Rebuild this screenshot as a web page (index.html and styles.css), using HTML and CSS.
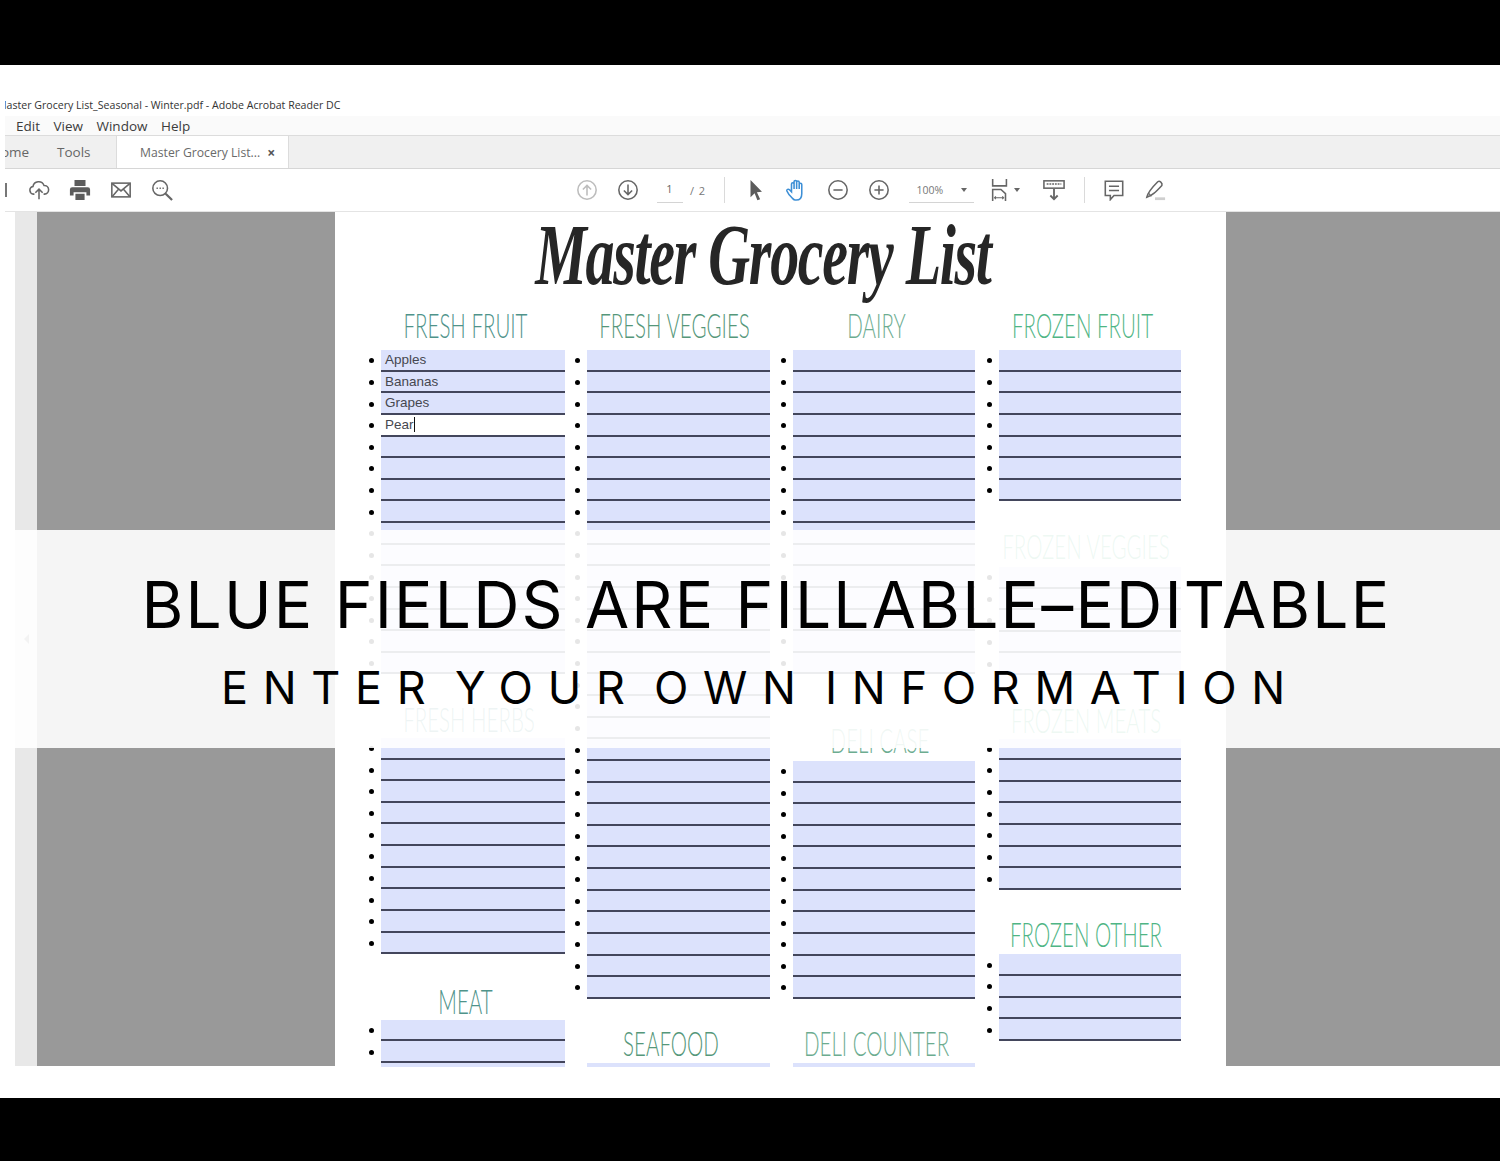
FILE: index.html
```html
<!DOCTYPE html>
<html lang="en">
<head>
<meta charset="utf-8">
<title>Master Grocery List</title>
<link rel="stylesheet" href="styles.css">
</head>
<body>
<div class="letterbox"></div>
<main class="shot">
  <div class="window">
    <div class="titlebar"><span>Master Grocery List_Seasonal - Winter.pdf - Adobe Acrobat Reader DC</span></div>
    <nav class="menubar"><span>Edit</span><span>View</span><span>Window</span><span>Help</span></nav>
    <div class="tabbar">
      <span class="tab-home">Home</span>
      <span class="tab-tools">Tools</span>
      <div class="tab-active"><span>Master Grocery List...</span><b>×</b></div>
    </div>
    <div class="toolbar">
      <i class="stub"></i>
      <span class="btn first"><svg viewBox="0 0 24 24" class="ico"><path d="M7 16.500H6a4.200 4.200 0 0 1-.6-8.300A6.300 6.300 0 0 1 17.500 7a4.700 4.700 0 0 1 .5 9.500h-1"/><path d="M12 22V11M8 15l4-4 4 4"/></svg></span>
      <span class="btn"><svg viewBox="0 0 24 24" class="ico solid"><path d="M6 1h12v6.500H6zM3.500 9h17A2.500 2.500 0 0 1 23 11.500V18h-4v-3.500H5V18H1v-6.500A2.500 2.500 0 0 1 3.500 9zM7 16h10v7H7z"/></svg></span>
      <span class="btn"><svg viewBox="0 0 24 24" class="ico"><rect x="2" y="4.500" width="20" height="15"/><path d="M2.500 5 12 13l9.500-8M2.500 19l7-8M21.500 19l-7-8"/></svg></span>
      <span class="btn"><svg viewBox="0 0 24 24" class="ico"><circle cx="10" cy="10" r="8"/><path d="m16 16 7 7" stroke-width="2.400"/><path d="M6 10h1.500M9.300 10h1.500M12.500 10H14"/></svg></span>
      <span class="btn nav-start"><svg viewBox="0 0 24 24" class="ico faint"><circle cx="12" cy="12" r="10"/><path d="M12 18V7M7.500 11.500 12 7l4.500 4.500"/></svg></span>
      <span class="btn"><svg viewBox="0 0 24 24" class="ico"><circle cx="12" cy="12" r="10"/><path d="M12 6v11M7.500 12.500 12 17l4.500-4.500"/></svg></span>
      <span class="page-num">1</span>
      <span class="page-total">/ 2</span>
      <i class="sep sep-a"></i>
      <span class="btn"><svg viewBox="0 0 24 24" class="ico solid"><path d="M6 1 18.500 14l-5.500.5 3.500 7.500-3 1.300-3-7.800L6 20z"/></svg></span>
      <span class="btn"><svg viewBox="0 0 24 24" class="ico blue"><path d="M6.500 20.500C4.500 18.500 2 15.500 1 13c-.5-1.500 1.500-2.500 2.800-1.300L6 14V5.500a1.400 1.400 0 0 1 2.800 0V11V3a1.400 1.400 0 0 1 2.800 0v8V3.500a1.400 1.400 0 0 1 2.800 0V11V6a1.400 1.400 0 0 1 2.800 0v10c0 4-2 7-6 7H10c-1.500 0-2.500-1.500-3.500-2.500z"/></svg></span>
      <span class="btn"><svg viewBox="0 0 24 24" class="ico"><circle cx="12" cy="12" r="10"/><path d="M7 12h10"/></svg></span>
      <span class="btn"><svg viewBox="0 0 24 24" class="ico"><circle cx="12" cy="12" r="10"/><path d="M7 12h10M12 7v10"/></svg></span>
      <span class="zoom-field"><span>100%</span><i class="caret"></i></span>
      <span class="btn fit"><svg viewBox="0 0 24 24" class="ico"><path d="M4 0v7.500h15V0"/><path d="M4 24V11.500h9l5 4.500v8"/><path d="M6 20.500h10M7.500 19 6 20.500 7.500 22M14.500 19l1.500 1.500-1.500 1.500" stroke-width="1.100"/></svg><i class="caret"></i></span>
      <span class="btn scroll"><svg viewBox="0 0 24 24" class="ico"><rect x="1" y="2" width="22" height="8"/><path d="M4 5.500h16" stroke-dasharray="2 1"/><path d="M12 11v11M8 18l4 4 4-4" stroke-width="2"/></svg></span>
      <i class="sep sep-b"></i>
      <span class="btn"><svg viewBox="0 0 24 24" class="ico"><path d="M2.500 2.500h19v15.500h-9.500l-4 4.500V18H2.500z"/><path d="M6.500 8h11M6.500 12.500h11"/></svg></span>
      <span class="btn"><svg viewBox="0 0 24 24" class="ico"><path d="M3 20c1-5 4-9 12-17 2-1.500 5.500 1 4.500 4C12 15 9 18 3 20z"/><path d="M5 15.500 8 19" stroke-width="1.200"/><path d="M12 21.500h11" stroke="#cfcfcf" stroke-width="3"/></svg></span>
    </div>
    <div class="viewer">
      <div class="rail"></div>
      <div class="strip"><i class="rail-arrow"></i></div>
      <div class="gutter"></div>
      <article class="page">
        <h1 class="doc-title">Master Grocery List</h1>
        <div class="columns">
          <div class="col">
            <section>
              <h2 class="c1 m8">FRESH FRUIT</h2>
              <ul>
                <li><span>Apples</span></li><li><span>Bananas</span></li><li><span>Grapes</span></li>
                <li><span class="editing">Pear</span></li>
                <li><span></span></li><li><span></span></li><li><span></span></li><li><span></span></li><li><span></span></li>
                <li><span></span></li><li><span></span></li><li><span></span></li><li><span></span></li><li><span></span></li><li><span></span></li>
              </ul>
            </section>
            <section>
              <h2 class="c1 m2 nudge">FRESH HERBS</h2>
              <ul>
                <li><span></span></li><li><span></span></li><li><span></span></li><li><span></span></li><li><span></span></li>
                <li><span></span></li><li><span></span></li><li><span></span></li><li><span></span></li><li><span></span></li>
              </ul>
            </section>
            <section class="after-herbs">
              <h2 class="c1 m2">MEAT</h2>
              <ul><li><span></span></li><li><span></span></li><li><span></span></li></ul>
            </section>
          </div>
          <div class="col">
            <section>
              <h2 class="c2 m8 nudge">FRESH VEGGIES</h2>
              <ul>
                <li><span></span></li><li><span></span></li><li><span></span></li><li><span></span></li><li><span></span></li>
                <li><span></span></li><li><span></span></li><li><span></span></li><li><span></span></li><li><span></span></li>
                <li><span></span></li><li><span></span></li><li><span></span></li><li><span></span></li><li><span></span></li>
                <li><span></span></li><li><span></span></li><li><span></span></li><li><span></span></li><li><span></span></li>
                <li><span></span></li><li><span></span></li><li><span></span></li><li><span></span></li><li><span></span></li>
                <li><span></span></li><li><span></span></li><li><span></span></li><li><span></span></li><li><span></span></li>
              </ul>
            </section>
            <section>
              <h2 class="c2 m3">SEAFOOD</h2>
              <ul><li><span></span></li></ul>
            </section>
          </div>
          <div class="col">
            <section>
              <h2 class="c3 m8">DAIRY</h2>
              <ul>
                <li><span></span></li><li><span></span></li><li><span></span></li><li><span></span></li><li><span></span></li>
                <li><span></span></li><li><span></span></li><li><span></span></li><li><span></span></li><li><span></span></li>
                <li><span></span></li><li><span></span></li><li><span></span></li><li><span></span></li><li><span></span></li>
              </ul>
            </section>
            <section class="after-dairy">
              <h2 class="c3 m4 nudge">DELI CASE</h2>
              <ul>
                <li><span></span></li><li><span></span></li><li><span></span></li><li><span></span></li><li><span></span></li><li><span></span></li>
                <li><span></span></li><li><span></span></li><li><span></span></li><li><span></span></li><li><span></span></li>
              </ul>
            </section>
            <section>
              <h2 class="c3 m3">DELI COUNTER</h2>
              <ul><li><span></span></li></ul>
            </section>
          </div>
          <div class="col">
            <section>
              <h2 class="c4 m8">FROZEN FRUIT</h2>
              <ul>
                <li><span></span></li><li><span></span></li><li><span></span></li><li><span></span></li>
                <li><span></span></li><li><span></span></li><li><span></span></li>
              </ul>
            </section>
            <section>
              <h2 class="c4 m4 nudge">FROZEN VEGGIES</h2>
              <ul><li><span></span></li><li><span></span></li><li><span></span></li><li><span></span></li><li><span></span></li></ul>
            </section>
            <section>
              <h2 class="c4 m2 nudge">FROZEN MEATS</h2>
              <ul>
                <li><span></span></li><li><span></span></li><li><span></span></li><li><span></span></li>
                <li><span></span></li><li><span></span></li><li><span></span></li>
              </ul>
            </section>
            <section>
              <h2 class="c4 m3 nudge">FROZEN OTHER</h2>
              <ul><li><span></span></li><li><span></span></li><li><span></span></li><li><span></span></li></ul>
            </section>
          </div>
        </div>
      </article>
      <div class="gutter-right"></div>
    </div>
  </div>
</main>
<div class="letterbox bottom"></div>
<aside class="banner">
  <p class="banner-main">BLUE FIELDS ARE FILLABLE–EDITABLE</p>
  <p class="banner-sub">ENTER YOUR OWN INFORMATION</p>
</aside>
</body>
</html>
```
FILE: styles.css
```css
* { box-sizing: border-box; }
html, body { margin: 0; padding: 0; }
body {
  position: relative;
  width: 1500px;
  height: 1161px;
  overflow: hidden;
  background: #000;
  display: flex;
  flex-direction: column;
  font-family: "Open Sans", "Liberation Sans", sans-serif;
}
.letterbox { height: 65px; background: #000; flex: none; }
.letterbox.bottom { height: 63px; }
.shot {
  height: 1033px;
  flex: none;
  background: #fff;
  padding: 33px 0 0 5px;
  overflow: hidden;
}
.window { overflow: hidden; height: 969px; display: flex; flex-direction: column; }

.titlebar {
  height: 18px;
  flex: none;
  overflow: hidden;
  font-size: 10.600px;
  line-height: 14px;
  color: #333;
  white-space: nowrap;
}
.titlebar span { display: block; margin-left: -8px; }
.menubar {
  height: 19px;
  flex: none;
  background: #fafafa;
  display: flex;
  padding-left: 11px;
  gap: 13.500px;
  font-size: 13.500px;
  line-height: 20px;
  color: #3c3c3c;
}
.tabbar {
  height: 34px;
  flex: none;
  display: flex;
  align-items: center;
  background: #f0f0f0;
  border-top: 1px solid #dcdcdc;
  border-bottom: 1px solid #d6d6d6;
  font-size: 13.500px;
  color: #666;
  overflow: hidden;
}
.tab-home { margin-left: -14px; width: 66px; flex: none; }
.tab-tools { width: 59px; flex: none; }
.tab-active {
  width: 173px;
  height: 34px;
  flex: none;
  display: flex;
  align-items: center;
  padding-left: 23px;
  background: #fff;
  border-left: 1px solid #dcdcdc;
  border-right: 1px solid #dcdcdc;
  font-size: 12.200px;
  color: #6a6a6a;
}
.tab-active b { margin-left: 7px; font-size: 14px; color: #555; }

.toolbar {
  height: 43px;
  flex: none;
  display: flex;
  align-items: center;
  background: #fff;
  border-bottom: 1px solid #e4e4e4;
}
.stub { width: 2px; height: 14px; background: #777; flex: none; }
.btn { width: 41px; height: 24px; flex: none; display: flex; align-items: center; justify-content: center; }
.btn.first { margin-left: 11.500px; }
.btn.nav-start { margin-left: 384px; }
.ico {
  width: 22px;
  height: 22px;
  fill: none;
  stroke: #666;
  stroke-width: 1.700;
}
.ico.solid { fill: #5c5c5c; stroke: none; }
.ico.faint { stroke: #bdbdbd; }
.ico.blue { stroke: #3d8fd6; }
.page-num {
  width: 26px;
  margin-left: 8px;
  height: 26px;
  line-height: 24px;
  text-align: center;
  font-size: 11px;
  color: #666;
  border-bottom: 1px solid #d4d4d4;
  flex: none;
}
.page-total { width: 30px; text-align: center; font-size: 11px; color: #777; word-spacing: 2px; flex: none; }
.sep { width: 1px; height: 26px; background: #dadada; flex: none; }
.sep-a { margin-left: 11px; margin-right: 11px; }
.sep-b { margin-left: 9px; margin-right: 9px; }
.zoom-field {
  width: 65px;
  height: 26px;
  margin-left: 9px;
  flex: none;
  display: flex;
  align-items: center;
  justify-content: space-between;
  padding: 0 7px 0 8px;
  font-size: 10.500px;
  color: #777;
  border-bottom: 1px solid #d4d4d4;
}
.caret {
  width: 0;
  height: 0;
  border-left: 3.500px solid transparent;
  border-right: 3.500px solid transparent;
  border-top: 4px solid #666;
  flex: none;
}
.btn.fit { margin-left: 6px; width: 50px; gap: 3px; }
.btn.scroll { width: 41px; margin-left: 4px; }

.viewer { height: 855px; flex: none; display: flex; align-items: flex-start; }
.rail { width: 10px; height: 854px; flex: none; background: #fff; }
.strip {
  width: 22px;
  height: 854px;
  flex: none;
  background: #e8e8e8;
  display: flex;
  align-items: center;
  justify-content: center;
}
.rail-arrow {
  width: 0;
  height: 0;
  border-top: 5px solid transparent;
  border-bottom: 5px solid transparent;
  border-right: 5px solid #888;
}
.gutter { width: 298px; height: 854px; flex: none; background: #999; }
.gutter-right { flex: 1; height: 854px; background: #999; }

.page {
  width: 891px;
  height: 855px;
  flex: none;
  background: #fff;
  overflow: hidden;
  padding-left: 31px;
}
.doc-title {
  height: 100px;
  margin: 0;
  display: flex;
  justify-content: center;
  align-items: center;
  font-family: "Liberation Serif", serif;
  font-style: italic;
  font-weight: 700;
  font-size: 58px;
  color: #262626;
  letter-spacing: -1.300px;
  white-space: nowrap;
  transform: translate(-33px, -8px) scaleY(1.500);
}
.columns {
  display: grid;
  grid-template-columns: 206px 206px 206px 197px;
}
.col:nth-child(1) { padding-right: 7px; }
.col:nth-child(2) { padding-right: 8px; }
.col:nth-child(3) { padding-right: 9px; }
.col section + section { margin-top: 31.500px; }
.col section.after-herbs { margin-top: 33.700px; }
.col section.after-dairy { margin-top: 52.500px; }

h2 {
  height: 30px;
  margin: 0;
  display: flex;
  justify-content: center;
  font-family: Lato, "Liberation Sans", sans-serif;
  font-weight: 300;
  font-size: 20.500px;
  line-height: 30px;
  white-space: nowrap;
  transform: translateY(-2.500px) scaleY(1.650);
}
h2.nudge { padding-left: 7px; }
.c1 { color: #4f938a; }
.c2 { color: #55977a; }
.c3 { color: #6cac90; }
.c4 { color: #4fb585; }
.m8 { margin-bottom: 8px; }
.m4 { margin-bottom: 4px; }
.m3 { margin-bottom: 3px; }
.m2 { margin-bottom: 2px; }

ul { list-style: none; margin: 0; padding: 0; }
li {
  height: 21.630px;
  display: flex;
  align-items: center;
}
li::before {
  content: "";
  width: 5px;
  height: 5px;
  margin: 0 7.500px 0 2.500px;
  border-radius: 50%;
  background: #000;
  flex: none;
}
li span {
  flex: 1;
  height: 100%;
  padding-left: 4px;
  background: #dce2fc;
  border-bottom: 2px solid #43465c;
  font-family: "Liberation Sans", Arial, sans-serif;
  font-size: 13.500px;
  line-height: 19px;
  color: #45474f;
}
li span.editing { background: #fff; }
li span.editing::after {
  content: "";
  display: inline-block;
  width: 1px;
  height: 15px;
  background: #111;
  vertical-align: -3px;
}

.banner {
  position: absolute;
  left: 0;
  top: 530px;
  width: 1500px;
  height: 218px;
  background: rgba(255, 255, 255, 0.9);
  text-align: center;
  color: #000;
  font-family: Inter, "Liberation Sans", sans-serif;
  white-space: nowrap;
}
.banner p { margin: 0; }
.banner-main {
  font-size: 64px;
  font-weight: 400;
  line-height: 80px;
  margin-top: 35px !important;
  letter-spacing: 2.200px;
  padding-left: 33px;
}
.banner-sub {
  font-size: 45px;
  font-weight: 400;
  line-height: 56px;
  margin-top: 15px !important;
  letter-spacing: 14.700px;
  word-spacing: -13px;
  padding-left: 21px;
}
```
